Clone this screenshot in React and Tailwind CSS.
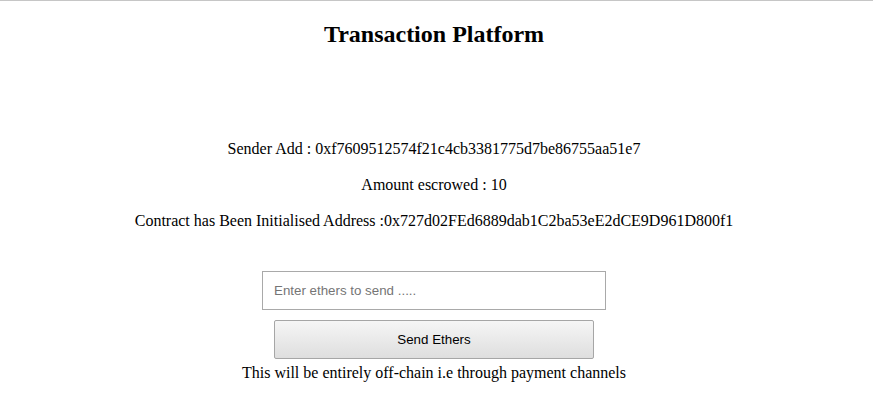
export default function App() {
  return (
    <div className="w-[873px] h-[420px] bg-white border-t border-[#c6c6c6] font-['Liberation_Serif',serif] text-black">
      <div className="w-[868px] flex flex-col items-center">
        <h2 className="mt-[19px] text-[24px] leading-[28px] font-bold">Transaction Platform</h2>

        <div className="mt-[91px] flex flex-col items-center gap-4 text-[16px] leading-[20px]">
          <p>Sender Add : 0xf7609512574f21c4cb3381775d7be86755aa51e7</p>
          <p>Amount escrowed : 10</p>
          <p>Contract has Been Initialised Address :0x727d02FEd6889dab1C2ba53eE2dCE9D961D800f1</p>
        </div>

        <input
          type="text"
          placeholder="Enter ethers to send ....."
          className="mt-[40px] w-[344px] h-[39px] px-[11px] border border-[#a9a9a9] bg-white font-['Liberation_Sans',Arial,sans-serif] text-[13.333px] placeholder:text-[#757575] outline-none"
        />

        <button className="mt-[10px] w-[320px] h-[39px] border border-[#a6a6a6] rounded-[2px] bg-gradient-to-b from-[#f6f6f6] to-[#dedede] font-['Liberation_Sans',Arial,sans-serif] text-[13.333px] text-black">
          Send Ethers
        </button>

        <p className="mt-1 text-[16px] leading-[20px]">This will be entirely off-chain i.e through payment channels</p>
      </div>
    </div>
  )
}
